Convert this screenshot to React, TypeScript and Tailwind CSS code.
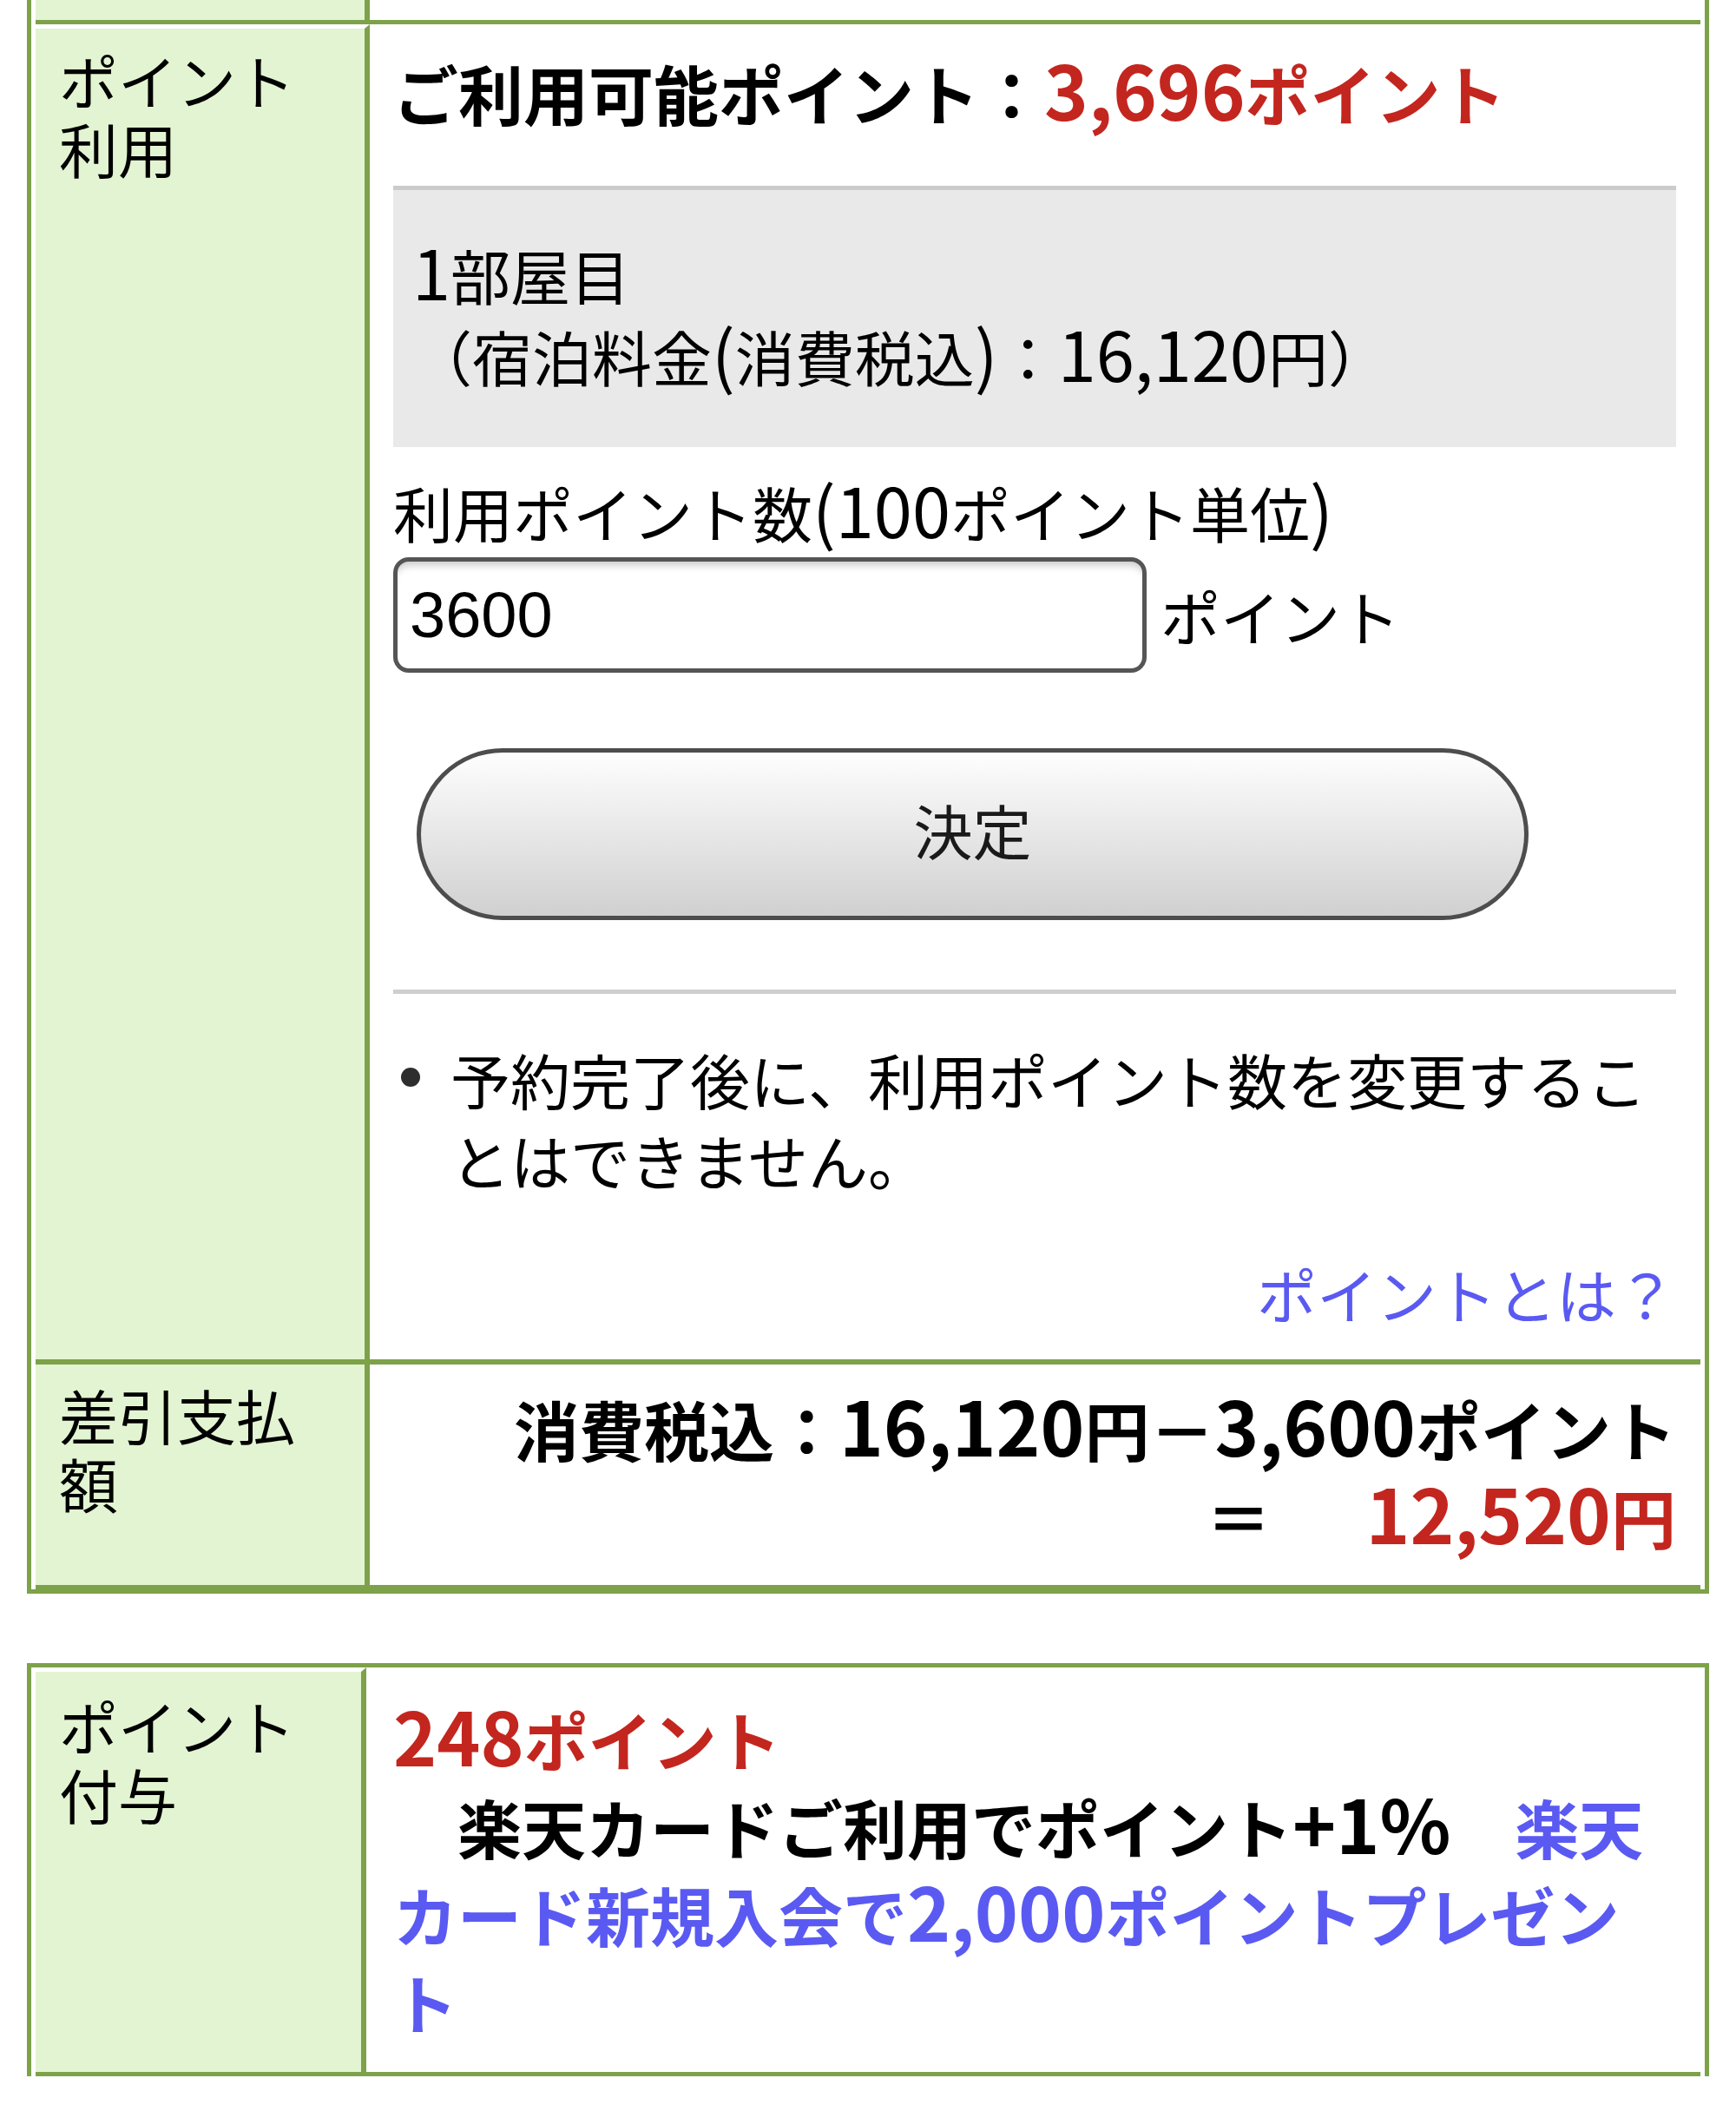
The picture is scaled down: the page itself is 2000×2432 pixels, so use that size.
import type { ReactNode } from "react";

// Latin runs (digits, parens, %) render ~15% larger in the reference font,
// so they get their own span to keep widths and heights in line.
function L({ children }: { children: ReactNode }) {
  return <span className="text-[1.15em] leading-none">{children}</span>;
}

const SP = "\u3000";

export default function App() {
  return (
    <div className="min-h-[2432px] bg-white font-['Noto_Sans_CJK_JP',sans-serif] text-black">
      {/* ポイント利用 / 差引支払額 table (scrolled: only the end of the row above shows) */}
      <div className="mx-[31px] border-x-[5px] border-b-[5px] border-[#7da249] px-[5px]">
        <div className="flex h-[28px] border-b-[5px] border-[#7da249]">
          <div className="w-[385px] shrink-0 border-r-[6px] border-r-[#7da249] bg-[#e2f4d1]" />
          <div className="flex-1" />
        </div>

        <div className="flex border-b-[6px] border-[#7da249]">
          <div className="w-[385px] shrink-0 border-r-[6px] border-t-[5px] border-r-[#7da249] border-t-white bg-[#e2f4d1] pl-[27px] pr-[40px] pt-[19px] text-[68px] leading-[79px]">
            ポイント利用
          </div>
          <div className="min-w-0 flex-1 pl-[27px] pr-[28px] pt-[28px] pb-[29px]">
            <div className="text-[75px] font-bold leading-[101px]">
              ご利用可能ポイント：
              <span className="text-[#c3261e]">
                <L>3,696</L>ポイント
              </span>
            </div>

            <div className="mt-[57px] border-t-[5px] border-[#cbcbcb] bg-[#e9e9e9] pt-[50px] pb-[58px] pl-[22px] text-[69px] leading-[94px]">
              <div>
                <L>1</L>部屋目
              </div>
              <div>
                （宿泊料金<L>(</L>消費税込<L>)</L>：<L>16,120</L>円）
              </div>
            </div>

            <div className="mt-[28px] text-[69px] leading-[94px]">
              利用ポイント数<L>(100</L>ポイント単位<L>)</L>
            </div>
            <div className="mt-[5px] flex items-center">
              <input
                type="text"
                readOnly
                value="3600"
                className="h-[133px] w-[868px] rounded-[18px] border-[5px] border-[#555555] bg-white px-[14px] font-['Liberation_Sans',sans-serif] text-[74px] text-black shadow-[inset_0_10px_10px_-6px_rgba(0,0,0,0.22)] outline-none"
              />
              <span className="ml-[16px] text-[69px] leading-[94px]">ポイント</span>
            </div>

            <div className="mt-[87px] pl-[27px]">
              <button
                type="button"
                className="h-[198px] w-[1281px] rounded-full border-[5px] border-[#4d4d4d] bg-[linear-gradient(to_bottom,#fefefe,#d0d0d0)] pb-[10px] text-[68px] text-[#1a1a1a]"
              >
                決定
              </button>
            </div>

            <div className="mt-[80px] h-[5px] bg-[#cfcfcf]" />

            <div className="mt-[52px] flex text-[69px] leading-[93px]">
              <span className="mt-[33px] ml-[9px] mr-[35px] h-[22px] w-[22px] shrink-0 rounded-full bg-[#2e2e2e]" />
              <span>予約完了後に、利用ポイント数を変更することはできません。</span>
            </div>

            <div className="mt-[60px] text-right text-[69px] leading-[94px] text-[#5a5af2]">
              ポイントとは？
            </div>
          </div>
        </div>

        <div className="flex border-b-[5px] border-[#7da249]">
          <div className="w-[385px] shrink-0 border-r-[6px] border-r-[#7da249] bg-[#e2f4d1] pl-[27px] pr-[40px] pt-[18px] text-[68px] leading-[79px]">
            差引支払額
          </div>
          <div className="min-w-0 flex-1 pl-[27px] pr-[28px] pt-[23px] pb-[29px] text-right text-[75px] font-bold leading-[101px]">
            <div>
              消費税込：<L>16,120</L>円－<L>3,600</L>ポイント
            </div>
            <div>
              ＝{SP}
              <span className="ml-[34px] text-[#c3261e]">
                <L>12,520</L>円
              </span>
            </div>
          </div>
        </div>
      </div>

      {/* ポイント付与 table */}
      <div className="mx-[31px] mt-[80px] border-x-[5px] border-t-[5px] border-[#7da249] px-[5px]">
        <div className="flex border-b-[5px] border-[#7da249]">
          <div className="w-[381px] shrink-0 border-r-[6px] border-t-[5px] border-r-[#7da249] border-t-white bg-[#e2f4d1] pl-[27px] pr-[40px] pt-[22px] text-[68px] leading-[79px]">
            ポイント付与
          </div>
          <div className="min-w-0 flex-1 pl-[31px] pr-[28px] pt-[31px] pb-[31px] text-[74px] font-bold leading-[101px]">
            <div className="text-[#c3261e]">
              <L>248</L>ポイント
            </div>
            <div>
              {SP}楽天カードご利用でポイント<L>+1%</L>
              {SP}
              <a className="text-[#5a5af2]">
                楽天
                <br />
                カード新規入会で<L>2,000</L>ポイントプレゼン
                <br />ト
              </a>
            </div>
          </div>
        </div>
      </div>
    </div>
  );
}
